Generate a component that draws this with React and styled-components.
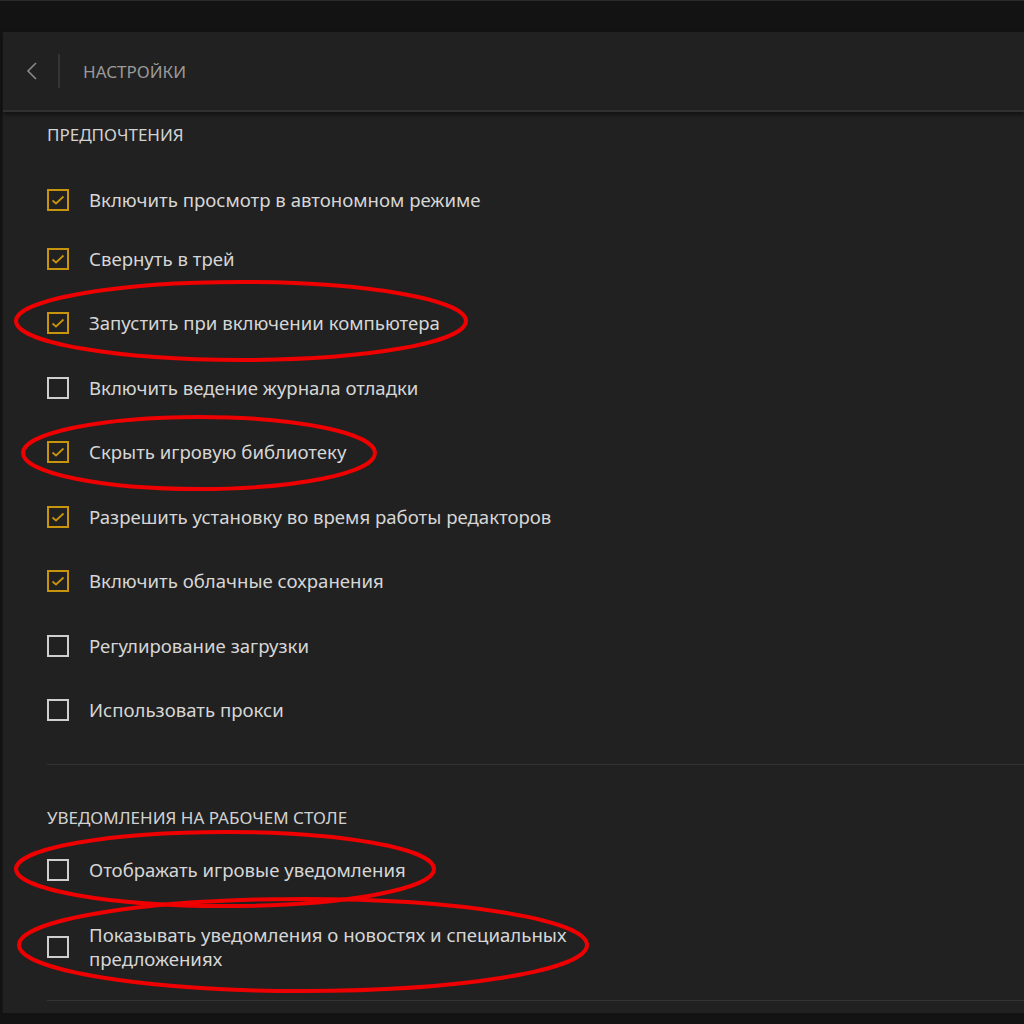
import React from 'react'
import styled, { createGlobalStyle } from 'styled-components'

const GlobalStyle = createGlobalStyle`
  html, body {
    margin: 0;
    padding: 0;
    background: #141414;
  }
  body {
    font-family: "Noto Sans", "Open Sans", sans-serif;
  }
`

const Screen = styled.div`
  position: relative;
  width: 1024px;
  height: 1024px;
  background: #131313;
  border-top: 1px solid #2b2b2b;
  box-sizing: border-box;
  overflow: hidden;
  display: flex;
  flex-direction: column;
`

const TopStrip = styled.div`
  height: 31px;
  flex-shrink: 0;
`

const Panel = styled.div`
  margin-left: 3px;
  height: 981px;
  background: #212121;
  display: flex;
  flex-direction: column;
  box-shadow: -1px 0 0 #181818;
`

const Header = styled.div`
  height: 78px;
  display: flex;
  align-items: center;
  border-bottom: 2px solid #303030;
  box-shadow: 0 3px 4px rgba(0, 0, 0, 0.45);
  flex-shrink: 0;
`

const BackButton = styled.div`
  width: 53px;
  display: flex;
  justify-content: center;
  align-items: center;
  padding-left: 2px;
`

const HeaderDivider = styled.div`
  width: 2px;
  height: 34px;
  background: #353535;
`

const HeaderTitle = styled.div`
  margin-left: 23px;
  color: #9a9a9a;
  font-size: 17px;
`

const Content = styled.div`
  padding-left: 44px;
  display: flex;
  flex-direction: column;
`

const SectionTitle = styled.div`
  color: #d2d2d2;
  font-size: 17px;
  line-height: 24px;
  margin-top: ${p => p.$top}px;
`

const List = styled.div`
  display: flex;
  flex-direction: column;
  gap: ${p => p.$gap}px;
  margin-top: ${p => p.$top}px;
`

const Row = styled.div`
  min-height: 40px;
  display: flex;
  align-items: center;
  &:first-child {
    margin-bottom: ${p => (p.$tight ? -6 : 0)}px;
  }
`

const Box = styled.div`
  width: 22px;
  height: 22px;
  box-sizing: border-box;
  border: 2px solid ${p => (p.$checked ? '#c8940c' : '#cfcfcf')};
  display: flex;
  align-items: center;
  justify-content: center;
  flex-shrink: 0;
`

const Label = styled.div`
  margin-left: 20px;
  color: #d6d6d6;
  font-size: 18.6px;
  line-height: 24px;
  max-width: 490px;
`

const Divider = styled.div`
  height: 1px;
  background: #343434;
  margin-top: ${p => p.$top}px;
`

const Annotations = styled.svg`
  position: absolute;
  left: 0;
  top: 0;
  pointer-events: none;
`

const Check = () => (
  <svg width="14" height="12" viewBox="0 0 14 12">
    <polyline points="1.5,6.5 5,9.5 12.5,2.5" fill="none" stroke="#c8940c" strokeWidth="1.8" />
  </svg>
)

const Option = ({ checked, label, tight }) => (
  <Row $tight={tight}>
    <Box $checked={checked}>{checked && <Check />}</Box>
    <Label>{label}</Label>
  </Row>
)

const preferences = [
  { label: 'Включить просмотр в автономном режиме', checked: true },
  { label: 'Свернуть в трей', checked: true },
  { label: 'Запустить при включении компьютера', checked: true },
  { label: 'Включить ведение журнала отладки', checked: false },
  { label: 'Скрыть игровую библиотеку', checked: true },
  { label: 'Разрешить установку во время работы редакторов', checked: true },
  { label: 'Включить облачные сохранения', checked: true },
  { label: 'Регулирование загрузки', checked: false },
  { label: 'Использовать прокси', checked: false },
]

const notifications = [
  { label: 'Отображать игровые уведомления', checked: false },
  { label: 'Показывать уведомления о новостях и специальных предложениях', checked: false },
]

export default function App() {
  return (
    <>
      <GlobalStyle />
      <Screen>
        <TopStrip />
        <Panel>
          <Header>
            <BackButton>
              <svg width="14" height="22" viewBox="0 0 14 22">
                <polyline points="11,3 3,11 11,19" fill="none" stroke="#8a8a8a" strokeWidth="1.6" />
              </svg>
            </BackButton>
            <HeaderDivider />
            <HeaderTitle>НАСТРОЙКИ</HeaderTitle>
          </Header>
          <Content>
            <SectionTitle $top={11}>ПРЕДПОЧТЕНИЯ</SectionTitle>
            <List $gap={24.5} $top={33}>
              {preferences.map((o, i) => (
                <Option key={i} {...o} tight />
              ))}
            </List>
            <Divider $top={34} />
            <SectionTitle $top={41}>УВЕДОМЛЕНИЯ НА РАБОЧЕМ СТОЛЕ</SectionTitle>
            <List $gap={33} $top={20}>
              {notifications.map((o, i) => (
                <Option key={i} {...o} />
              ))}
            </List>
            <Divider $top={29} />
          </Content>
        </Panel>
        <Annotations width="1024" height="1024">
          <g fill="none" stroke="#ee0000" strokeWidth="4">
            <ellipse cx="241" cy="320" rx="225" ry="39" />
            <ellipse cx="199" cy="452" rx="176" ry="36" />
            <ellipse cx="225" cy="868" rx="209" ry="37" />
            <ellipse cx="303" cy="944" rx="284" ry="46" />
          </g>
        </Annotations>
      </Screen>
    </>
  )
}
